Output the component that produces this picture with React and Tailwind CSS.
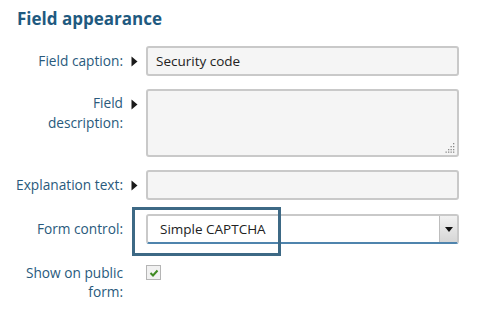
import React from "react";

const Arrow = () => (
  <svg width="7" height="11" viewBox="0 0 7 11" className="block">
    <path d="M0.5 0.5 L6.5 5.5 L0.5 10.5 Z" fill="#1a1a1a" />
  </svg>
);

export default function App() {
  const font = { fontFamily: '"Open Sans", "Noto Sans", sans-serif' };
  return (
    <div className="relative w-[500px] h-[314px] bg-white overflow-hidden" style={font}>
      <h1 className="pl-[17px] pt-[7px] text-[17px] leading-[23px] font-bold text-[#1f5a80]">
        Field appearance
      </h1>

      <div className="mt-[16px] flex flex-col">
        {/* Field caption */}
        <div className="flex h-[30px] items-center">
          <div className="w-[123px] text-right text-[13.7px] text-[#295a7c]">Field caption:</div>
          <div className="ml-[8px] w-[15px]"><Arrow /></div>
          <div className="w-[313px] h-[30px] flex items-center rounded-[3px] border-2 border-[#c9c9c9] bg-[#f5f5f5] pl-[8px] text-[13.5px] text-[#222]">
            Security code
          </div>
        </div>

        {/* Field description */}
        <div className="mt-[13px] flex h-[68px] items-start">
          <div className="w-[123px] pt-[4px] text-right text-[13.7px] leading-[20px] text-[#295a7c]">
            Field
            <br />
            description:
          </div>
          <div className="ml-[8px] w-[15px] pt-[10px]"><Arrow /></div>
          <div className="relative w-[313px] h-[68px] rounded-[3px] border-2 border-[#c9c9c9] bg-[#f5f5f5]">
            <svg width="10" height="10" viewBox="0 0 10 10" className="absolute right-[2px] bottom-[2px]">
              <g fill="#8a8a8a">
                <rect x="8" y="0" width="1.3" height="1.3" />
                <rect x="5.5" y="3" width="1.3" height="1.3" />
                <rect x="8" y="3" width="1.3" height="1.3" />
                <rect x="3" y="6" width="1.3" height="1.3" />
                <rect x="5.5" y="6" width="1.3" height="1.3" />
                <rect x="8" y="6" width="1.3" height="1.3" />
                <rect x="0.5" y="8.5" width="1.3" height="1.3" />
                <rect x="3" y="8.5" width="1.3" height="1.3" />
                <rect x="5.5" y="8.5" width="1.3" height="1.3" />
                <rect x="8" y="8.5" width="1.3" height="1.3" />
              </g>
            </svg>
          </div>
        </div>

        {/* Explanation text */}
        <div className="mt-[13px] flex h-[30px] items-center">
          <div className="w-[123px] text-right text-[13.7px] text-[#295a7c]">Explanation text:</div>
          <div className="ml-[8px] w-[15px]"><Arrow /></div>
          <div className="w-[313px] h-[30px] rounded-[3px] border-2 border-[#c9c9c9] bg-[#f5f5f5]" />
        </div>

        {/* Form control */}
        <div className="mt-[14px] flex h-[30px] items-center">
          <div className="w-[123px] text-right text-[13.7px] text-[#295a7c]">Form control:</div>
          <div className="ml-[8px] w-[15px]" />
          <div className="flex w-[313px] h-[30px] rounded-[3px] border-2 border-[#c9c9c9] border-b-[#4f84ad] bg-white">
            <div className="flex-1 flex items-center pl-[12px] text-[13.5px] text-[#222]">Simple CAPTCHA</div>
            <div className="w-[18px] h-full flex items-center justify-center border-l border-[#bdbdbd] bg-gradient-to-b from-[#f2f2f2] to-[#d6d6d6]">
              <svg width="8" height="5" viewBox="0 0 8 5">
                <path d="M0 0 L8 0 L4 5 Z" fill="#111" />
              </svg>
            </div>
          </div>
        </div>

        {/* Show on public form */}
        <div className="mt-[19px] flex items-start">
          <div className="w-[123px] text-right text-[13.7px] leading-[19px] text-[#295a7c]">
            Show on public
            <br />
            form:
          </div>
          <div className="ml-[23px] mt-[2px] w-[15px] h-[15px] border border-[#b5b5b5] bg-[#f1f1f1] flex items-center justify-center">
            <svg width="10" height="8" viewBox="0 0 10 8">
              <path d="M1.5 4 L4 6.5 L8.5 1.5" fill="none" stroke="#3f8a22" strokeWidth="2" />
            </svg>
          </div>
        </div>
      </div>

      {/* highlight annotation box */}
      <div className="absolute left-[132px] top-[207px] w-[149px] h-[49px] border-[3px] border-[#3d6985] pointer-events-none" />
    </div>
  );
}
